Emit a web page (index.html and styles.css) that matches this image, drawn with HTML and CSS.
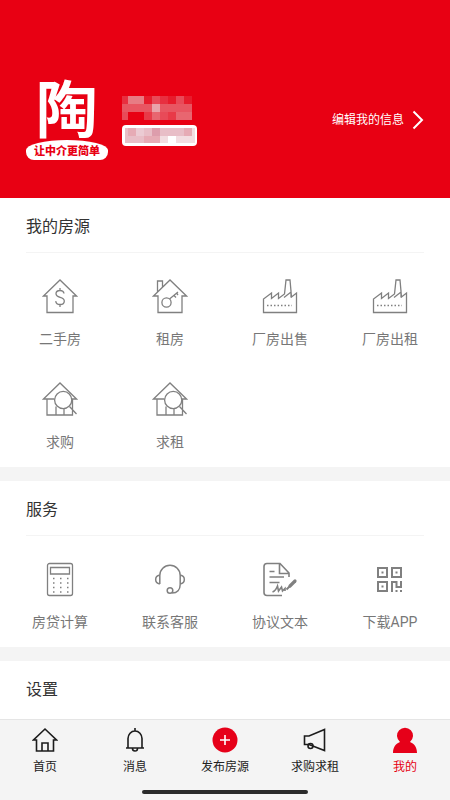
FILE: index.html
```html
<!DOCTYPE html>
<html lang="zh-CN">
<head>
<meta charset="utf-8">
<meta name="viewport" content="width=device-width, initial-scale=1">
<title>我的</title>
<link rel="stylesheet" href="styles.css">
</head>
<body>
<svg class="symbols" aria-hidden="true">
  <symbol id="factory" viewBox="0 0 36 36"><path d="M1.500 34.500V21l8-6v5.500l7-5.500v5.500l6-4.500L24 2h4l1.500 17 5-4v19.500zM22 19.500l7-5.500v5.500"/><path d="M5 27.500h25" stroke-dasharray="1.500 2"/></symbol>
  <symbol id="search-house" viewBox="0 0 36 36"><path d="M12.500 18H1.500L18 2l16.500 16h-4.500M5 18v16h25.500V18M14 25.500V34M22 28v6M27.500 25.500l7 7.500"/><circle cx="21.200" cy="19" r="8.600"/></symbol>
</svg>
<div class="app">
  <header class="profile">
    <div class="logo">
      <span class="logo-mark">陶</span>
      <span class="logo-slogan">让中介更简单</span>
    </div>
    <div class="user">
      <svg class="user-name" viewBox="0 0 70 24" shape-rendering="crispEdges" aria-hidden="true">
        <path fill="#e85662" d="M0 8h70v8H0z"/>
        <path fill="#e9a3aa" d="M30 8h8v8h-8z"/>
        <path fill="#e82f40" d="M0 0h6v8H0zM38 0h8v8h-8z"/>
        <path fill="#e77c84" d="M6 0h16v8H6z"/>
        <path fill="#e71c2c" d="M22 0h8v8h-8zM46 0h8v8h-8zM62 0h8v8h-8z"/>
        <path fill="#e84a58" d="M30 0h8v8h-8zM54 0h8v8h-8zM0 16h6v8H0zM38 16h8v8h-8z"/>
        <path fill="#e83a48" d="M22 16h8v8h-8zM46 16h8v8h-8z"/>
        <path fill="#e86670" d="M30 16h8v8h-8zM54 16h16v8H54z"/>
      </svg>
      <svg class="user-tag" viewBox="0 0 75 21" aria-hidden="true">
        <rect width="75" height="21" rx="4" fill="#fff"/>
        <g shape-rendering="crispEdges">
          <path fill="#e8bec7" d="M3 3h67v15H3z"/>
          <path fill="#e6abb5" d="M6 3h8v8H6zM62 3h8v8h-8zM22 11h16v7H22z"/>
          <path fill="#ebcbd3" d="M14 3h8v8h-8z"/>
          <path fill="#dd9dac" d="M30 3h8v8h-8z"/>
          <path fill="#f2dde1" d="M38 11h8v7h-8zM54 11h19v7H54zM70 3h3v8h-3z"/>
          <path fill="#fff" d="M46 11h8v7h-8z"/>
        </g>
      </svg>
    </div>
    <a class="edit" href="#">编辑我的信息
      <svg class="chevron" viewBox="0 0 12 20" aria-hidden="true"><path d="M1.500 1.500l8.500 8.500-8.500 8.500"/></svg>
    </a>
  </header>
  <main class="content">
    <section class="panel">
      <h2 class="panel-title">我的房源</h2>
      <nav class="grid">
        <a class="item" href="#"><svg class="icon" viewBox="0 0 36 36"><path d="M5 18H1.500L18 2l16.500 16H31v16.500H5z"/><path d="M22 15.500c-.3-2-2-3-4-3s-4 1.200-4 3.200c0 4.600 8.300 2.600 8.300 7.200 0 2.200-2 3.600-4.300 3.600s-4-1.200-4.300-3.400M18 10v2.500M18 26.500V29"/></svg>二手房</a>
        <a class="item" href="#"><svg class="icon" viewBox="0 0 36 36"><path d="M6 18H1.500L18 2l16.500 16H30v16.500H6zM5.500 14V3h5v6"/><circle cx="14.500" cy="24.500" r="4.600"/><path d="M17.500 21l8.500-7M22 17.500l2 2M24.500 15l1.500 2"/></svg>租房</a>
        <a class="item" href="#"><svg class="icon"><use href="#factory"/></svg>厂房出售</a>
        <a class="item" href="#"><svg class="icon"><use href="#factory"/></svg>厂房出租</a>
        <a class="item" href="#"><svg class="icon"><use href="#search-house"/></svg>求购</a>
        <a class="item" href="#"><svg class="icon"><use href="#search-house"/></svg>求租</a>
      </nav>
    </section>
    <section class="panel">
      <h2 class="panel-title">服务</h2>
      <nav class="grid">
        <a class="item" href="#"><svg class="icon" viewBox="0 0 36 36"><rect x="5.500" y="2.500" width="25" height="32" rx="2"/><path d="M8.500 6.500h19v6.500h-19z"/><path d="M11 17.500h16M11 22h16M11 26.500h16M11 31h16" stroke-dasharray="1.500 5.500"/></svg>房贷计算</a>
        <a class="item" href="#"><svg class="icon" viewBox="0 0 36 36"><path stroke-width="1.500" d="M7.800 23V14.500a10.200 10.200 0 0 1 20.400 0v9c0 5-3 8.500-8 8.500M7.800 14c-5.500 1-5.500 8 0 9M28.200 14c5.500 1 5.500 8 0 9"/><circle cx="18" cy="29.500" r="2.800" stroke-width="1.500"/></svg>联系客服</a>
        <a class="item" href="#"><svg class="icon" viewBox="0 0 36 36"><g stroke-width="1.600"><path d="M20 34.500H5a3 3 0 0 1-3-3V5.500a3 3 0 0 1 3-3h13l9 9.500v4M17.500 2.500v10H27M7.500 10.500h5M7.500 16h14.500M7.500 21.500h10"/><path d="M10.500 31c3-1 5-6 5-6l1 5 3-4 1 4 2.500-2.500v2.500"/></g><path d="M28 25l5-5" stroke-width="3.200" stroke-linecap="round"/><path d="M24.500 28.500l3-3" stroke-width="2"/></svg>协议文本</a>
        <a class="item" href="#"><svg class="icon" viewBox="0 0 36 36"><path stroke-width="2" d="M6 7h9v9H6zM20 7h9v9h-9zM6 21h9v9H6zM20 31V21h4.500v5H29v-6"/><path class="solid" d="M9.500 10.500h2v2h-2zM23.500 10.500h2v2h-2zM9.500 24.500h2v2h-2zM23.500 29h2v2h-2zM28 29h2v2h-2z"/></svg>下载APP</a>
      </nav>
    </section>
    <section class="panel">
      <h2 class="panel-title">设置</h2>
    </section>
  </main>
  <footer class="footer">
    <nav class="tabs">
      <a class="tab" href="#"><svg class="tab-icon" viewBox="0 0 26 26"><path d="M4.500 13H1.500L13 2l11.500 11h-3v11h-17zM10 24v-8h6v8"/></svg>首页</a>
      <a class="tab" href="#"><svg class="tab-icon" viewBox="0 0 26 26"><path d="M4 21h18M6 21v-9.500a7 7.500 0 0 1 14 0V21M13 1v3M10.500 21.500a2.500 2.500 0 0 0 5 0"/></svg>消息</a>
      <a class="tab" href="#"><svg class="tab-icon" viewBox="0 0 26 26"><circle class="red" cx="13" cy="13" r="12.500"/><path class="plus" d="M13 8v10M8 13h10"/></svg>发布房源</a>
      <a class="tab" href="#"><svg class="tab-icon" viewBox="0 0 26 26"><path d="M2.500 9H7l15.500-6.500v21L7 17.500H2.500z"/><circle cx="8.500" cy="19" r="2.500"/></svg>求购求租</a>
      <a class="tab active" href="#" aria-current="page"><svg class="tab-icon" viewBox="0 0 26 26"><path class="red" d="M1 26c0-6 3-9.500 7-11a8 8 0 1 1 10 0c4 1.500 7 5 7 11z"/></svg>我的</a>
    </nav>
    <div class="home-bar"></div>
  </footer>
</div>
</body>
</html>
```
FILE: styles.css
```css
* { box-sizing: border-box; }
body {
  margin: 0;
  background: #f4f4f4;
  font-family: Roboto, "Noto Sans CJK SC", sans-serif;
  color: #333;
}
a { color: inherit; text-decoration: none; }
svg { display: block; fill: none; }
.symbols { position: absolute; width: 0; height: 0; }
.app {
  display: flex;
  flex-direction: column;
  min-height: 100vh;
}
.profile {
  display: flex;
  align-items: center;
  padding: 76px 26px 38px;
  background: #e80013;
  color: #fff;
}
.logo {
  display: flex;
  flex-direction: column;
  align-items: center;
  gap: 4px;
  width: 82px;
}
.logo-mark {
  padding-top: 12px;
  font-size: 62px;
  line-height: 48px;
  font-weight: 700;
}
.logo-slogan {
  width: 100%;
  padding-top: 4px;
  border-radius: 50% 50% 8px 8px / 10px 10px 8px 8px;
  background: #fff;
  color: #e80013;
  font-size: 11px;
  line-height: 16px;
  font-weight: 900;
  text-align: center;
}
.user {
  display: flex;
  flex-direction: column;
  gap: 5px;
  margin-top: 6px;
  margin-left: 14px;
}
.user-name { width: 70px; height: 24px; }
.user-tag { width: 75px; height: 21px; }
.edit {
  display: flex;
  align-items: center;
  gap: 8px;
  margin-top: 4px;
  margin-left: auto;
  font-size: 12px;
  line-height: 20px;
}
.chevron { width: 12px; height: 20px; stroke: #fff; stroke-width: 2; }
.content {
  display: flex;
  flex-direction: column;
  flex: 1;
  gap: 14px;
}
.panel { background: #fff; }
.panel:last-child { flex: 1; }
.panel-title {
  margin: 0 26px;
  padding-top: 4px;
  border-bottom: 1px solid #f4f4f4;
  font-size: 16px;
  line-height: 50px;
  font-weight: 400;
}
.panel:last-child .panel-title { border: 0; }
.grid {
  display: grid;
  grid-template-columns: repeat(4, 1fr);
  row-gap: 27px;
  padding: 25px 5px 10px;
}
.item {
  display: flex;
  flex-direction: column;
  align-items: center;
  gap: 10px;
  font-size: 14px;
  line-height: 30px;
  color: #777;
}
.icon { width: 36px; height: 36px; stroke: #808080; stroke-width: 1.3; }
.solid { fill: #808080; stroke: none; }
.footer {
  padding: 7px 0 6px;
  border-top: 1px solid #e5e5e5;
  background: #f4f4f4;
}
.tabs { display: grid; grid-template-columns: repeat(5, 1fr); }
.tab {
  display: flex;
  flex-direction: column;
  align-items: center;
  gap: 4px;
  font-size: 12px;
  line-height: 20px;
  color: #222;
}
.active { color: #e60012; }
.tab-icon { width: 26px; height: 26px; stroke: #1c1c1c; stroke-width: 1.6; }
.tab-icon .red { fill: #e60019; stroke: none; }
.tab-icon .plus { stroke: #fff; }
.home-bar {
  width: 37%;
  height: 4px;
  margin: 13px auto 0;
  border-radius: 2px;
  background: #2b2b2b;
}
```
